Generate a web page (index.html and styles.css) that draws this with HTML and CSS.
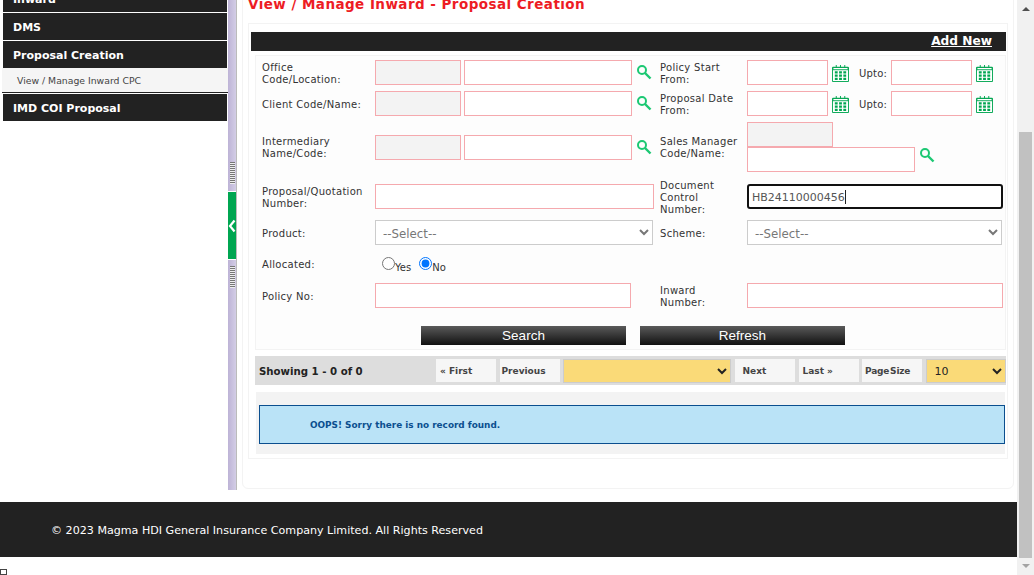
FILE: index.html
```html
<!DOCTYPE html>
<html>
<head>
  <title>View / Manage Inward - Proposal Creation</title>
  <meta name="viewport" content="width=device-width">
  <link rel="stylesheet" href="styles.css">
</head>
<body>

<svg class="icon-defs" width="0" height="0">
  <symbol id="icon-search" viewBox="0 0 15 15">
    <circle cx="5" cy="5" r="4" fill="none" stroke="#1cc873" stroke-width="2"/>
    <path d="M8 8l5.500 5.500" fill="none" stroke="#1cc873" stroke-width="2.400"/>
  </symbol>
  <symbol id="icon-cal" viewBox="0 0 18 18">
    <path d="M.5 2.500h17v15H.5z" fill="#fff" stroke="#00a651"/>
    <path d="M1 2.500h16v2.500H1zM4.500 0v3M9 0v3M13.500 0v3" fill="none" stroke="#00a651"/>
    <path d="M3 6.500h3v2.500H3zM7.500 6.500h3v2.500h-3zM12 6.500h3v2.500h-3zM3 10h3v2.500H3zM7.500 10h3v2.500h-3zM12 10h3v2.500h-3zM3 13.500h3V16H3zM7.500 13.500h3V16h-3zM12 13.500h3V16h-3z" fill="#00a651"/>
  </symbol>
</svg>

<div class="shell">
  <div class="viewport">
    <div class="scrolled">
      <div class="work">

        <nav class="sidebar">
          <a class="nav-head">Inward</a>
          <a class="nav-head">DMS</a>
          <a class="nav-head nav-open">Proposal Creation</a>
          <a class="nav-sub">View / Manage Inward CPC</a>
          <a class="nav-head">IMD COI Proposal</a>
        </nav>

        <div class="splitter">
          <div class="split-part split-top"><span class="grip"></span></div>
          <div class="split-toggle">
            <svg width="8" height="14" viewBox="0 0 8 14"><path d="M6.500 1.500L2 7l4.500 5.500" fill="none" stroke="#fff" stroke-width="2.200"/></svg>
          </div>
          <div class="split-part split-bottom"><span class="grip"></span></div>
        </div>

        <main class="card">
          <h1 class="page-title">View / Manage Inward - Proposal Creation</h1>

          <section class="panel">
            <div class="panel-head"><a class="add-new">Add New</a></div>

            <form class="search-form">
              <div class="row">
                <div class="cell">
                  <label class="lbl">Office Code/Location:</label>
                  <input class="txt code" disabled>
                  <input class="txt name">
                  <svg class="ico-search"><use href="#icon-search"/></svg>
                </div>
                <div class="cell cell-right">
                  <label class="lbl">Policy Start From:</label>
                  <input class="txt date">
                  <svg class="ico-cal"><use href="#icon-cal"/></svg>
                  <span class="upto">Upto:</span>
                  <input class="txt date">
                  <svg class="ico-cal"><use href="#icon-cal"/></svg>
                </div>
              </div>

              <div class="row">
                <div class="cell">
                  <label class="lbl">Client Code/Name:</label>
                  <input class="txt code" disabled>
                  <input class="txt name">
                  <svg class="ico-search"><use href="#icon-search"/></svg>
                </div>
                <div class="cell cell-right">
                  <label class="lbl">Proposal Date From:</label>
                  <input class="txt date">
                  <svg class="ico-cal"><use href="#icon-cal"/></svg>
                  <span class="upto">Upto:</span>
                  <input class="txt date">
                  <svg class="ico-cal"><use href="#icon-cal"/></svg>
                </div>
              </div>

              <div class="row">
                <div class="cell">
                  <label class="lbl">Intermediary Name/Code:</label>
                  <input class="txt code" disabled>
                  <input class="txt name">
                  <svg class="ico-search"><use href="#icon-search"/></svg>
                </div>
                <div class="cell cell-right">
                  <label class="lbl">Sales Manager Code/Name:</label>
                  <div class="stack">
                    <input class="txt mgr-code" disabled>
                    <div class="stack-line">
                      <input class="txt mgr-name">
                      <svg class="ico-search"><use href="#icon-search"/></svg>
                    </div>
                  </div>
                </div>
              </div>

              <div class="row row-doc">
                <div class="cell">
                  <label class="lbl">Proposal/Quotation Number:</label>
                  <input class="txt quote">
                </div>
                <div class="cell cell-right">
                  <label class="lbl">Document Control Number:</label>
                  <div class="caret-wrap">
                    <input class="txt wide focused" value="HB24110000456">
                    <span class="caret"></span>
                  </div>
                </div>
              </div>

              <div class="row row-select">
                <div class="cell">
                  <label class="lbl">Product:</label>
                  <select class="sel product"><option>--Select--</option></select>
                </div>
                <div class="cell cell-right">
                  <label class="lbl">Scheme:</label>
                  <select class="sel scheme"><option>--Select--</option></select>
                </div>
              </div>

              <div class="row row-radio">
                <div class="cell">
                  <label class="lbl">Allocated:</label>
                  <div class="radios">
                    <input type="radio" name="allocated"><span>Yes</span>
                    <input type="radio" name="allocated" checked><span>No</span>
                  </div>
                </div>
              </div>

              <div class="row">
                <div class="cell">
                  <label class="lbl">Policy No:</label>
                  <input class="txt policy">
                </div>
                <div class="cell cell-right">
                  <label class="lbl">Inward Number:</label>
                  <input class="txt wide">
                </div>
              </div>

              <div class="actions">
                <button type="button" class="btn">Search</button>
                <button type="button" class="btn">Refresh</button>
              </div>
            </form>

            <div class="pager">
              <span class="pager-info">Showing 1 - 0 of 0</span>
              <a class="pg">« First</a>
              <a class="pg pg-prev">Previous</a>
              <select class="pg-sel pg-pages"><option></option></select>
              <a class="pg pg-next">Next</a>
              <a class="pg pg-last">Last »</a>
              <a class="pg pg-size">Page Size</a>
              <select class="pg-sel pg-count"><option>10</option></select>
            </div>

            <div class="result">
              <div class="alert">OOPS! Sorry there is no record found.</div>
            </div>
          </section>
        </main>
      </div>

      <footer class="footer">© 2023 Magma HDI General Insurance Company Limited. All Rights Reserved</footer>
      <span class="stray-box"></span>
    </div>
  </div>

  <div class="scrollbar">
    <span class="arrow arrow-up"></span>
    <span class="thumb"></span>
    <span class="arrow arrow-down"></span>
  </div>
</div>

</body>
</html>
```

FILE: styles.css
```css
* { box-sizing: border-box; }
html, body { margin: 0; padding: 0; background: #fff; }
body { font-family: "DejaVu Sans", Verdana, sans-serif; font-size: 10px; color: #333; overflow: hidden; }
.icon-defs { position: absolute; }

.shell { display: flex; height: 575px; overflow: hidden; }
.viewport { flex: 1; overflow: hidden; }
.scrolled { margin-top: -40px; }
.work { display: flex; height: 530px; }

/* left menu */
.sidebar { width: 228px; padding: 25px 1px 0 3px; }
.nav-head { display: block; height: 27px; margin-bottom: 1px; padding-left: 10px; background: #222; color: #fff; font-weight: bold; font-size: 11px; line-height: 29px; }
.nav-open { margin-bottom: 0; }
.nav-sub { display: block; height: 25px; margin: 0 -1px 1px; padding-left: 15px; background: #f5f5f5; border-bottom: 1px solid #222; font-size: 9.300px; line-height: 26px; color: #444; }

/* splitter */
.splitter { display: flex; flex-direction: column; width: 9px; border-right: 1px solid #bbb; }
.split-part { display: flex; flex-direction: column; align-items: center; background: linear-gradient(to right, #bdb3d6, #d3cde6); }
.split-top { height: 231px; justify-content: flex-end; padding-bottom: 7px; }
.split-bottom { flex: 1; padding-top: 6px; }
.split-toggle { display: flex; align-items: center; justify-content: center; height: 67px; margin: 1px 0; background: #00a651; }
.grip { display: block; width: 5px; height: 22px; background: repeating-linear-gradient(#777 0, #777 1px, #eee 1px, #eee 2px); }

/* content */
.card { width: 772px; height: 500px; margin: 29px 0 0 5px; padding: 5px 5px 0; border: 1px solid #f3f3f3; border-radius: 6px; }
.page-title { margin: 0; height: 28px; font-size: 13.500px; line-height: 18px; letter-spacing: .45px; color: #ed1c24; font-weight: bold; }
.panel { height: 436px; padding: 8px 1px 0 2px; border: 1px solid #f3f3f3; }
.panel-head { height: 19px; padding-right: 14px; background: #222; text-align: right; line-height: 19px; }
.add-new { color: #fff; font-size: 12.200px; font-weight: bold; text-decoration: underline; }

/* search form */
.search-form { display: flex; flex-direction: column; height: 295px; margin: 4px 0 0 4px; padding: 4px 0 0 6px; background: #fdfdfd; border: 1px solid #f3f3f3; }
.row { display: grid; grid-template-columns: 398px 1fr; margin-bottom: 6px; }
.row-doc { height: 36px; margin: 1px 0 5px; }
.row-doc .quote, .row-doc .caret-wrap { margin-bottom: 2px; }
.row-select { margin-bottom: 7px; }
.row-radio { height: 25px; }
.row-radio .lbl { margin: 0; }
.cell { display: flex; align-items: center; }
.lbl { flex: none; width: 113px; margin: 1px 0 -1px; padding-right: 8px; line-height: 12px; letter-spacing: .3px; }
.cell-right .lbl { width: 87px; padding-right: 4px; }

.txt { height: 25px; padding: 0 4px; border: 1px solid #f5a9ae; background: #fff; font-family: "DejaVu Sans", Verdana, sans-serif; font-size: 11px; color: #555; border-radius: 0; outline: none; }
.txt:disabled { background: #f3f3f3; }
.code { width: 86px; margin-right: 3px; }
.name { width: 168px; }
.quote { width: 279px; }
.product { width: 278px; }
.policy { width: 256px; }
.date { width: 81px; }
.wide { width: 256px; }
.mgr-code { display: block; width: 86px; }
.mgr-name { width: 168px; }
.focused { display: block; border: 2px solid #111; border-radius: 3px; padding: 2px 3px 0; outline: none; }
.stack-line { display: flex; align-items: center; }
.stack-line .ico-search { margin-bottom: 8px; }
.caret-wrap { position: relative; }
.caret { position: absolute; left: 98px; top: 6px; width: 1px; height: 14px; background: #222; }

.ico-search { flex: none; width: 15px; height: 15px; margin-left: 5px; }
.ico-cal { flex: none; width: 17px; height: 17px; margin: 2px 0 0 4px; }
.upto { flex: none; width: 32px; margin: 1px 0 -1px 10px; letter-spacing: .2px; }

.sel { height: 25px; padding: 2px 0 0 3px; border: 1px solid #ccc; background: #fff; font-family: "DejaVu Sans", Verdana, sans-serif; font-size: 11.800px; color: #777; border-radius: 0; }
.scheme { width: 255px; }

.radios { display: flex; align-items: flex-start; padding-top: 1px; }
.radios input { width: 13px; height: 13px; margin: 0 0 0 7px; }
.radios input:checked { margin-left: 8px; }
.radios span { padding-top: 5px; font-size: 10px; }

.actions { display: flex; gap: 14px; margin: 12px 0 0 159px; }
.btn { width: 205px; height: 19px; padding: 0; border: none; background: linear-gradient(#5a5a5a, #111); color: #fff; font-family: "Liberation Sans", Arial, sans-serif; font-size: 13.500px; line-height: 19px; }

/* pager */
.pager { display: flex; align-items: center; gap: 3.500px; height: 29px; margin: 6px 0 0 4px; background: #ddd; }
.pager-info { flex: none; width: 177.500px; padding: 2px 0 0 4px; font-weight: bold; font-size: 10.200px; color: #222; }
.pg { flex: none; width: 60px; height: 23px; padding-left: 4px; background: #f6f6f6; font-weight: bold; font-size: 9px; line-height: 25px; color: #444; }
.pg-prev { padding-left: 2px; }
.pg-next { padding-left: 8px; }
.pg-last { margin-left: .5px; }
.pg-size { padding-left: 3px; word-spacing: -2px; letter-spacing: -.2px; }
.pg-sel { flex: none; height: 24px; padding-top: 2px; border: 1px solid #ccc; background: #fada78; border-radius: 0; font-family: "DejaVu Sans", Verdana, sans-serif; font-size: 11px; color: #222; }
.pg-pages { width: 168px; }
.pg-count { width: 80.500px; padding-left: 4px; }

.result { height: 62px; margin: 7px 1px 0 5px; padding: 13px 0 0 3px; background: #f3f3f3; }
.alert { height: 39px; padding-left: 50px; border: 1px solid #0b4f8f; background: #bae3f7; color: #0b4f8f; font-weight: bold; font-size: 8.900px; line-height: 39px; }

/* footer */
.footer { height: 55px; margin-top: 12px; padding-left: 51px; background: #222; color: #fff; font-size: 11.100px; line-height: 57px; }
.stray-box { display: block; width: 7px; height: 6px; margin-top: 12px; border: 1px solid #444; }

/* painted page scrollbar */
.scrollbar { display: flex; flex-direction: column; align-items: center; flex: none; width: 17px; background: #f1f1f1; }
.thumb { display: block; width: 13px; height: 426px; margin-top: 121px; background: #c1c1c1; }
.arrow { display: block; width: 0; height: 0; border-left: 4px solid transparent; border-right: 4px solid transparent; }
.arrow-up { margin-top: 7px; border-bottom: 4px solid #505050; }
.arrow-down { margin-top: 6px; border-top: 4px solid #a3a3a3; }
```
